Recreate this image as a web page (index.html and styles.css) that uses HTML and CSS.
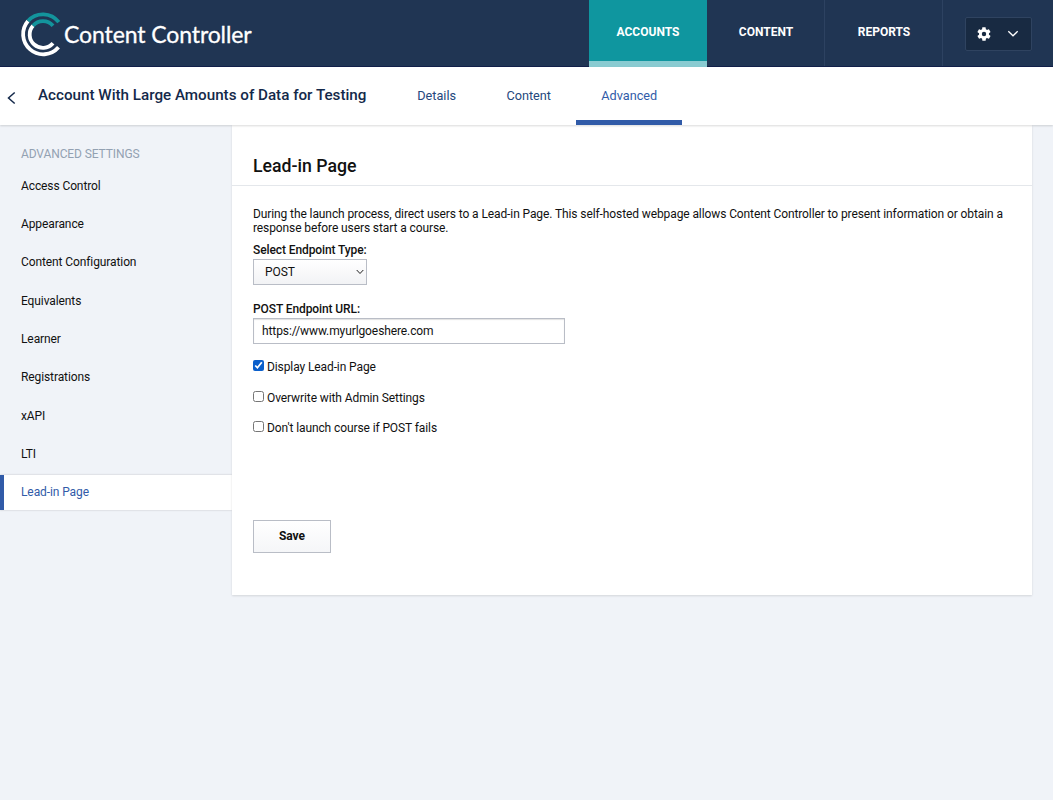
FILE: index.html
```html
<!DOCTYPE html>
<html lang="en">
<head>
  <meta charset="UTF-8">
  <meta name="viewport" content="width=device-width, initial-scale=1.0">
  <title>Content Controller</title>
  <link rel="stylesheet" href="styles.css">
</head>
<body>

  <header class="topbar">
    <a class="logo">
      <svg class="logo-mark" width="42" height="48" viewBox="20 10 42 48" fill="none" stroke-width="3.8">
        <path stroke="#fff" d="M28 21A20.1 20.1 0 1 0 58.5 47.3"/>
        <path stroke="#fff" d="M33 25.7A13.3 13.3 0 1 0 53 43.3"/>
        <path stroke="#13949c" d="M28 21A20.1 20.1 0 0 1 58.8 22.2"/>
        <path stroke="#13949c" d="M33 25.7A13.3 13.3 0 0 1 53 25.7"/>
      </svg>
      <span class="logo-text">Content Controller</span>
    </a>
    <nav class="main-nav">
      <a class="main-link active">ACCOUNTS</a>
      <a class="main-link">CONTENT</a>
      <a class="main-link">REPORTS</a>
    </nav>
    <div class="tools">
      <button class="settings" aria-label="Settings">
        <svg width="16" height="16" viewBox="0 0 24 24" fill="#fff">
          <path fill-rule="evenodd" d="M19.4 13c.1-.7.1-1.3 0-2l2.1-1.65c.2-.15.25-.4.1-.65l-2-3.45c-.1-.2-.4-.3-.6-.2l-2.5 1c-.5-.4-1.1-.75-1.7-1L14.4 2.4c0-.25-.2-.4-.45-.4h-4c-.25 0-.45.15-.5.4L9.1 5.05c-.6.25-1.15.6-1.7 1l-2.5-1c-.2-.1-.5 0-.6.2l-2 3.45c-.1.2-.1.5.1.65L4.6 11c-.1.7-.1 1.3 0 2l-2.15 1.65c-.2.15-.2.4-.1.65l2 3.45c.1.2.4.3.6.2l2.5-1c.5.4 1.1.75 1.7 1l.35 2.65c.05.25.25.4.5.4h4c.25 0 .45-.15.5-.4l.35-2.65c.6-.25 1.15-.6 1.7-1l2.5 1c.2.1.5 0 .6-.2l2-3.45c.1-.2.1-.5-.1-.65zM12 15.3a3.3 3.3 0 1 1 0-6.6a3.3 3.3 0 0 1 0 6.6z"/>
        </svg>
        <svg width="12" height="8" viewBox="0 0 12 8" fill="none" stroke="#fff" stroke-width="1.3">
          <path d="M1.3 1.3L6 5.8L10.7 1.3"/>
        </svg>
      </button>
    </div>
  </header>

  <div class="subbar">
    <a class="back" aria-label="Back">
      <svg width="9" height="14" viewBox="0 0 9 14" fill="none" stroke="#14294a" stroke-width="1.5">
        <path d="M7.7 1.5L1.5 7L7.7 12.5"/>
      </svg>
    </a>
    <h1 class="account">Account With Large Amounts of Data for Testing</h1>
    <nav class="tabs">
      <a class="tab">Details</a>
      <a class="tab">Content</a>
      <a class="tab active">Advanced</a>
    </nav>
  </div>

  <div class="layout">
    <aside class="sidebar">
      <h2 class="sidebar-title">ADVANCED SETTINGS</h2>
      <ul class="side-list">
        <li class="side-item">Access Control</li>
        <li class="side-item">Appearance</li>
        <li class="side-item">Content Configuration</li>
        <li class="side-item">Equivalents</li>
        <li class="side-item">Learner</li>
        <li class="side-item">Registrations</li>
        <li class="side-item">xAPI</li>
        <li class="side-item">LTI</li>
        <li class="side-item active">Lead-in Page</li>
      </ul>
    </aside>

    <main class="panel">
      <h2 class="panel-title">Lead-in Page</h2>
      <form class="panel-body">
        <p class="intro">During the launch process, direct users to a Lead-in Page. This self-hosted webpage allows Content Controller to present information or obtain a<br>response before users start a course.</p>

        <label class="field-label type-label" for="endpoint-type">Select Endpoint Type:</label>
        <div class="select">
          <select id="endpoint-type">
            <option>POST</option>
          </select>
          <svg class="select-arrow" width="8" height="6" viewBox="0 0 8 6" fill="none" stroke="#222" stroke-width="1">
            <path d="M.7 1L4 4.5L7.3 1"/>
          </svg>
        </div>

        <label class="field-label url-label" for="endpoint-url">POST Endpoint URL:</label>
        <input class="url" id="endpoint-url" type="text" value="https://www.myurlgoeshere.com">

        <div class="checks">
          <label class="check"><input type="checkbox" checked><span>Display Lead-in Page</span></label>
          <label class="check"><input type="checkbox"><span>Overwrite with Admin Settings</span></label>
          <label class="check"><input type="checkbox"><span>Don't launch course if POST fails</span></label>
        </div>

        <button class="save" type="button">Save</button>
      </form>
    </main>
  </div>

</body>
</html>
```
FILE: styles.css
```css
* {
  box-sizing: border-box;
}

body {
  margin: 0;
  min-height: 100vh;
  font-family: Roboto, "Liberation Sans", sans-serif;
  font-size: 12px;
  letter-spacing: -0.1px;
  color: #111;
  background-color: #f0f3f8;
}

h1, h2, p, ul {
  margin: 0;
  padding: 0;
}

/* top bar */

.topbar {
  display: flex;
  height: 67px;
  background-color: #203553;
  border-bottom: 1px solid #12204a;
}

.logo {
  display: flex;
  width: 589px;
  padding: 10px 0 0 20px;
}

.logo-text {
  margin-left: 2px;
  font-family: Lato, sans-serif;
  font-size: 23px;
  line-height: 49px;
  color: #fff;
  white-space: nowrap;
  -webkit-text-stroke: 0.3px #fff;
}

.main-nav {
  display: flex;
  letter-spacing: 0;
}

.main-link {
  width: 118px;
  height: 66px;
  padding-left: 1px;
  border-right: 1px solid #2d4261;
  font-weight: 700;
  line-height: 64px;
  text-align: center;
  color: #fff;
}

.main-link.active {
  height: 67px;
  padding-left: 0;
  border-right: 0;
  border-bottom: 6px solid #89cbd1;
  background-color: #0f969f;
}

.tools {
  padding: 17px 0 0 22px;
}

.settings {
  display: flex;
  align-items: center;
  gap: 15px;
  width: 67px;
  height: 34px;
  padding: 0 0 0 10px;
  border: 1px solid #2f4360;
  border-radius: 2px;
  background-color: #182a42;
}

/* account bar */

.subbar {
  position: relative;
  z-index: 1;
  display: flex;
  height: 58px;
  letter-spacing: 0;
  background-color: #fff;
  box-shadow: 0 1px 2px rgba(0, 0, 0, 0.15);
}

.back {
  width: 38px;
  padding: 24px 0 0 7px;
}

.account {
  width: 354px;
  font-size: 15.2px;
  font-weight: 500;
  line-height: 57px;
  color: #14294a;
  white-space: nowrap;
}

.tabs {
  display: flex;
}

.tab {
  padding: 0 25.2px;
  font-size: 12.7px;
  line-height: 57px;
  color: #24477d;
}

.tab.active {
  height: 58px;
  border-bottom: 5px solid #315ba8;
  color: #315ba8;
}

/* content */

.layout {
  display: flex;
}

.sidebar {
  width: 232px;
}

.sidebar-title {
  padding: 21px 0 0 21px;
  font-size: 12px;
  font-weight: 400;
  line-height: 17px;
  color: #93a1b2;
}

.side-list {
  display: flex;
  flex-direction: column;
  gap: 3.35px;
  padding-top: 5.5px;
  list-style: none;
}

.side-item {
  height: 35px;
  padding-left: 21px;
  line-height: 35px;
}

.side-item.active {
  padding-left: 17px;
  border-left: 4px solid #315ba8;
  color: #315ba8;
  background-color: #fff;
  box-shadow: 0 0 2px rgba(0, 0, 0, 0.2);
}

.panel {
  position: relative;
  width: 800px;
  height: 470px;
  background-color: #fff;
  box-shadow: 0 1px 2px rgba(0, 0, 0, 0.12);
}

.panel-title {
  height: 61px;
  padding: 24px 21px 0;
  border-bottom: 1px solid #e4e7eb;
  font-size: 17.7px;
  font-weight: 500;
  letter-spacing: 0;
  line-height: 35px;
}

.panel-body {
  display: flex;
  flex-direction: column;
  align-items: flex-start;
  padding: 21px 21px 0;
}

.intro {
  line-height: 14px;
  white-space: nowrap;
}

.field-label {
  font-weight: 500;
  line-height: 14px;
}

.type-label {
  margin-top: 8px;
}

.select {
  position: relative;
  width: 114px;
  height: 26px;
  margin: 2px 0 17px;
}

.select select {
  width: 100%;
  height: 100%;
  padding: 0 11px;
  border: 1px solid #b9bdc6;
  border-radius: 0;
  appearance: none;
  font: inherit;
  letter-spacing: inherit;
  color: #111;
  background: linear-gradient(#fff, #f2f3f5);
}

.select-arrow {
  position: absolute;
  top: 10px;
  right: 3px;
}

.url {
  width: 312px;
  height: 26px;
  margin-top: 2px;
  padding: 0 8px;
  border: 1px solid #b9bdc6;
  border-radius: 0;
  font: inherit;
  letter-spacing: inherit;
  color: #111;
  box-shadow: inset 0 1px 1px rgba(0, 0, 0, 0.12);
}

.checks {
  display: flex;
  flex-direction: column;
  gap: 16.7px;
  margin-top: 16px;
}

.check {
  display: flex;
  gap: 3px;
  height: 14px;
  line-height: 15px;
}

.check input {
  width: 11px;
  height: 11px;
  margin: 0;
  accent-color: #0b5fcb;
}

.save {
  width: 78px;
  height: 33px;
  margin-top: 84.6px;
  padding: 0;
  border: 1px solid #b9bdc6;
  font: inherit;
  font-weight: 700;
  color: #111;
  background: linear-gradient(#fff, #f5f6f8);
}
```
